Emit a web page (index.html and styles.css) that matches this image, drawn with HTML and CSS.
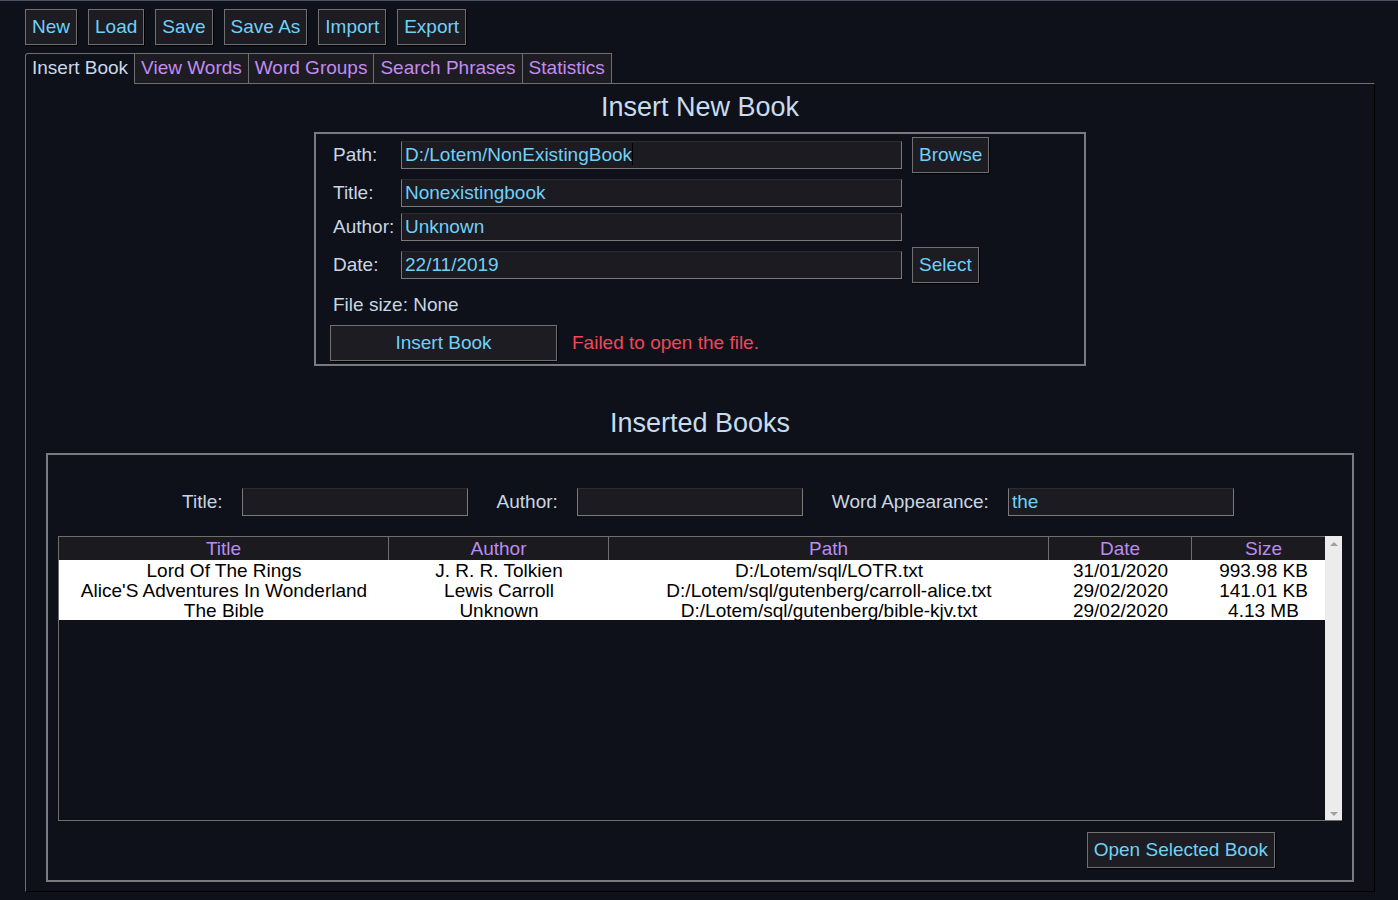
FILE: index.html
```html
<!DOCTYPE html>
<html>
<head>
<meta charset="utf-8">
<title>Books</title>
<link rel="stylesheet" href="styles.css">
</head>
<body>
<div class="app">
  <div class="toolbar">
    <button class="btn">New</button>
    <button class="btn">Load</button>
    <button class="btn">Save</button>
    <button class="btn">Save As</button>
    <button class="btn">Import</button>
    <button class="btn">Export</button>
  </div>
  <div class="tabs">
    <div class="tab active">Insert Book</div>
    <div class="tab">View Words</div>
    <div class="tab">Word Groups</div>
    <div class="tab">Search Phrases</div>
    <div class="tab">Statistics</div>
  </div>
  <div class="pane">
    <h1 class="heading first">Insert New Book</h1>
    <div class="group insert">
      <div class="frow tall">
        <span class="lbl">Path:</span>
        <div class="inp wide">D:/Lotem/NonExistingBook<span class="caret"></span></div>
        <button class="btn side">Browse</button>
      </div>
      <div class="frow">
        <span class="lbl">Title:</span>
        <div class="inp wide">Nonexistingbook</div>
      </div>
      <div class="frow">
        <span class="lbl">Author:</span>
        <div class="inp wide">Unknown</div>
      </div>
      <div class="frow tall">
        <span class="lbl">Date:</span>
        <div class="inp wide">22/11/2019</div>
        <button class="btn side">Select</button>
      </div>
      <div class="filesize">File size: None</div>
      <div class="actrow">
        <button class="btn insert-btn">Insert Book</button>
        <span class="error">Failed to open the file.</span>
      </div>
    </div>
    <h1 class="heading second">Inserted Books</h1>
    <div class="group books">
      <div class="filters">
        <span class="lbl">Title:</span>
        <div class="inp filt"></div>
        <span class="lbl">Author:</span>
        <div class="inp filt"></div>
        <span class="lbl">Word Appearance:</span>
        <div class="inp filt">the</div>
      </div>
      <div class="list">
        <div class="list-main">
          <div class="trow thead">
            <div class="cell">Title</div>
            <div class="cell">Author</div>
            <div class="cell">Path</div>
            <div class="cell">Date</div>
            <div class="cell">Size</div>
          </div>
          <div class="tbody">
            <div class="trow">
              <div class="cell">Lord Of The Rings</div>
              <div class="cell">J. R. R. Tolkien</div>
              <div class="cell">D:/Lotem/sql/LOTR.txt</div>
              <div class="cell">31/01/2020</div>
              <div class="cell">993.98 KB</div>
            </div>
            <div class="trow">
              <div class="cell">Alice'S Adventures In Wonderland</div>
              <div class="cell">Lewis Carroll</div>
              <div class="cell">D:/Lotem/sql/gutenberg/carroll-alice.txt</div>
              <div class="cell">29/02/2020</div>
              <div class="cell">141.01 KB</div>
            </div>
            <div class="trow">
              <div class="cell">The Bible</div>
              <div class="cell">Unknown</div>
              <div class="cell">D:/Lotem/sql/gutenberg/bible-kjv.txt</div>
              <div class="cell">29/02/2020</div>
              <div class="cell">4.13 MB</div>
            </div>
          </div>
        </div>
        <div class="vscroll">
          <span class="arr up"></span>
          <span class="arr down"></span>
        </div>
      </div>
      <button class="btn open-btn">Open Selected Book</button>
    </div>
  </div>
</div>
</body>
</html>
```

FILE: styles.css
```css
* { box-sizing: border-box; }

body {
  margin: 0;
  background: #0e111a;
  border-top: 1px solid #4b5263;
  font-family: "Liberation Sans", Arial, sans-serif;
  font-size: 19px;
  color: #c9d6e3;
}

.app {
  padding: 8px 23px 0 25px;
}

.btn {
  font-family: "Liberation Sans", Arial, sans-serif;
  font-size: 19px;
  color: #70d0f8;
  background: #1c1c22;
  border: 1px solid #707070;
  box-shadow: 1px 1px 0 #000;
  height: 36px;
  padding: 0 6px;
  margin: 0;
  line-height: 22px;
  cursor: default;
}

.toolbar {
  display: flex;
  gap: 11px;
  height: 36px;
}

.tabs {
  display: flex;
  margin-top: 8px;
  height: 30px;
  align-items: flex-end;
}

.tab {
  height: 30px;
  line-height: 28px;
  padding: 0 6px;
  border: 1px solid #6e6e6e;
  border-bottom: none;
  border-left: none;
  background: #1c1c22;
  color: #c28cf0;
  white-space: nowrap;
}

.tab.active {
  position: relative;
  z-index: 1;
  height: 31px;
  margin-bottom: -1px;
  background: #0e111a;
  color: #c9d8e8;
  border-left: 1px solid #6e6e6e;
  border-top-left-radius: 3px;
  padding: 0 6px 0 6px;
}

.pane {
  border-top: 1px solid #6e6e6e;
  border-left: 1px solid #6e6e6e;
  border-right: 1px solid #000;
  border-bottom: 1px solid #000;
  width: 1350px;
  padding: 0 20px 9px 20px;
}

.heading {
  margin: 0;
  font-weight: normal;
  font-size: 27px;
  line-height: 36px;
  text-align: center;
  color: #c8dcef;
}

.heading.first {
  padding-top: 5px;
  margin-bottom: 7px;
}

.heading.second {
  margin-top: 39px;
  margin-bottom: 12px;
}

.group {
  border: 2px solid #7a7b80;
}

.insert {
  width: 772px;
  margin: 0 auto;
  padding: 3px 17px 3px 17px;
}

.frow {
  display: flex;
  align-items: center;
  height: 28px;
  margin-bottom: 6px;
}

.frow.tall {
  height: 36px;
}

.lbl {
  white-space: nowrap;
  color: #c9d6e3;
}

.insert .lbl {
  width: 68px;
  flex: none;
}

.inp {
  height: 28px;
  background: #1b1b21;
  border: 1px solid #7a7a7a;
  border-top-color: #2c2c2c;
  color: #70d0f8;
  padding-left: 3px;
  line-height: 26px;
  white-space: nowrap;
}

.inp.wide {
  width: 501px;
  flex: none;
}

.caret {
  display: inline-block;
  width: 1px;
  height: 22px;
  background: #000;
  vertical-align: middle;
  margin-top: -3px;
}

.side {
  margin-left: 10px;
}

.filesize {
  margin-top: 11px;
  height: 22px;
  line-height: 22px;
}

.actrow {
  display: flex;
  align-items: center;
  margin-top: 9px;
}

.insert-btn {
  width: 227px;
  margin-left: -3px;
}

.error {
  margin-left: 15px;
  color: #f0475b;
}

.books {
  padding: 0 10px 12px 10px;
  display: flex;
  flex-direction: column;
}

.filters {
  display: flex;
  align-items: center;
  justify-content: center;
  padding-left: 16px;
  margin-top: 33px;
  height: 28px;
}

.filters .lbl {
  margin-right: 19px;
}

.inp.filt {
  width: 226px;
  margin-right: 29px;
}

.inp.filt:last-child {
  margin-right: 0;
}

.list {
  margin-top: 20px;
  height: 285px;
  display: flex;
  border-left: 1px solid #6e6e6e;
  border-bottom: 1px solid #6e6e6e;
}

.list-main {
  width: 1266px;
  flex: none;
  overflow: hidden;
}

.trow {
  display: grid;
  grid-template-columns: 330px 220px 440px 143px 143px;
  width: 1276px;
  height: 20px;
  background: #fff;
  color: #000;
}

.cell {
  text-align: center;
  white-space: nowrap;
  height: 20px;
  line-height: 20px;
  padding-top: 1px;
}

.thead {
  height: 24px;
  background: #1a1a1f;
  color: #bb8cf0;
  border-top: 1px solid #6e6e6e;
}

.thead .cell {
  height: 23px;
  line-height: 23px;
  padding-top: 0;
  border-right: 1px solid #6e6e6e;
}

.thead .cell:last-child {
  border-right: none;
}

.vscroll {
  width: 17px;
  flex: none;
  background: #ececec;
  display: flex;
  flex-direction: column;
  justify-content: space-between;
  align-items: center;
  padding: 6px 0 4px 0;
}

.arr {
  width: 0;
  height: 0;
  border-left: 4px solid transparent;
  border-right: 4px solid transparent;
}

.arr.up {
  border-bottom: 4px solid #a0a0a0;
}

.arr.down {
  border-top: 4px solid #a0a0a0;
}

.open-btn {
  align-self: flex-end;
  margin-top: 11px;
  margin-right: 67px;
}
```
